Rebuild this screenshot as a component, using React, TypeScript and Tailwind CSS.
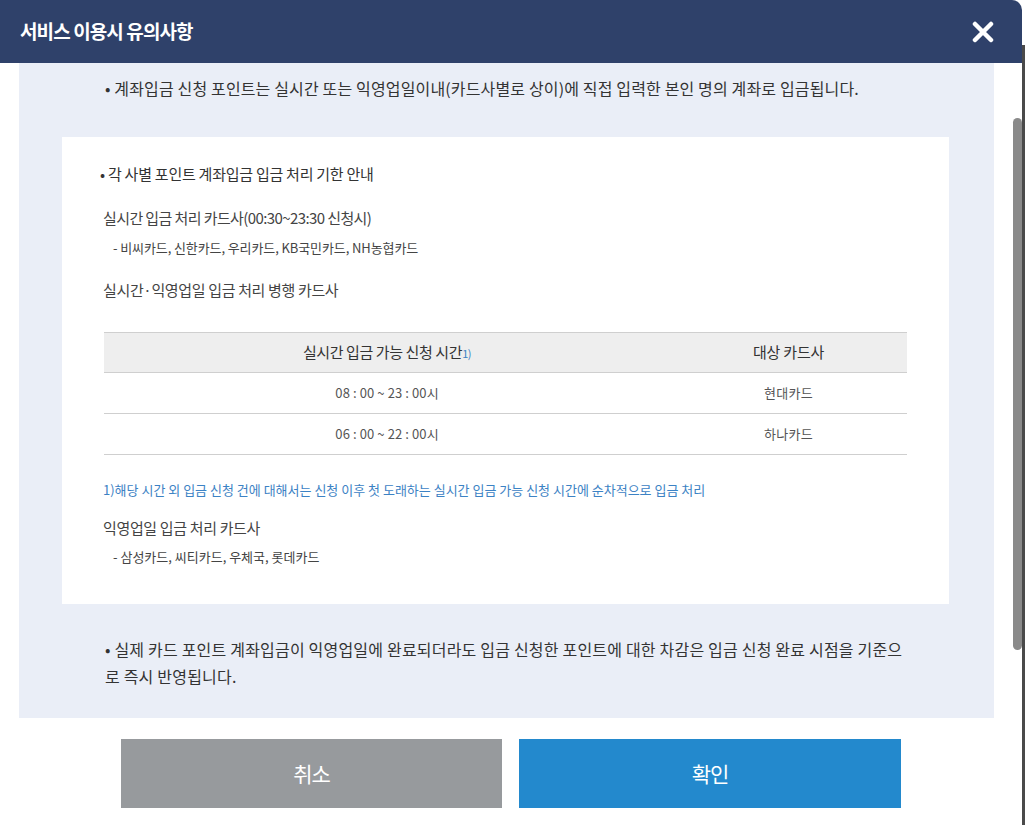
import React from "react";

const font = { fontFamily: '"Noto Sans CJK KR", "Noto Sans", sans-serif' };

export default function App() {
  return (
    <div className="flex h-[825px] w-[1025px] bg-white text-[#333]" style={font}>
      <div className="flex w-[1022px] flex-col overflow-hidden rounded-tr-[10px] bg-white">
        {/* header */}
        <div className="flex h-[63px] shrink-0 items-center justify-between bg-[#2f416a] pl-[20px] pr-[28px]">
          <h1 className="text-[19px] font-bold tracking-[-0.9px] text-white">서비스 이용시 유의사항</h1>
          <svg width="22" height="22" viewBox="0 0 22 22" className="mt-[1px]">
            <path d="M3 3 L19 19 M19 3 L3 19" stroke="white" strokeWidth="4.5" strokeLinecap="round" />
          </svg>
        </div>
        {/* body */}
        <div className="flex h-[655px] shrink-0">
          <div className="w-[1013px] px-[19px]">
            <div className="h-[655px] bg-[#eaeef7] pt-[12px] pb-[27px]">
              <p className="whitespace-nowrap pl-[86px] text-[16px] leading-[26px] tracking-[0.15px] text-[#333]">
                • 계좌입금 신청 포인트는 실시간 또는 익영업일이내(카드사별로 상이)에 직접 입력한 본인 명의 계좌로 입금됩니다.
              </p>
              <div className="ml-[43px] mt-[36px] w-[887px] bg-white px-[42px] pt-[27px] pb-[37px]">
                <p className="-ml-[4px] text-[15px] leading-[20px] tracking-[-0.25px] text-[#333]">• 각 사별 포인트 계좌입금 입금 처리 기한 안내</p>
                <p className="mt-[24px] -ml-[1px] text-[15px] leading-[20px] tracking-[-0.6px] text-[#444]">실시간 입금 처리 카드사(00:30~23:30 신청시)</p>
                <p className="mt-[10px] pl-[9px] text-[13px] leading-[20px] tracking-[-0.1px] text-[#444]">- 비씨카드, 신한카드, 우리카드, KB국민카드, NH농협카드</p>
                <p className="mt-[22px] -ml-[1px] text-[15px] leading-[20px] tracking-[-0.35px] text-[#444]">실시간·익영업일 입금 처리 병행 카드사</p>
                <table className="mt-[32px] w-full border-collapse text-center">
                  <thead>
                    <tr className="h-[40px] border-t border-b border-[#cfcfcf] bg-[#eeeeee]">
                      <th className="w-[70.5%] text-[15px] font-normal tracking-[-0.4px] text-[#333]">
                        실시간 입금 가능 신청 시간<span className="text-[11px] text-[#3c82c4]">1)</span>
                      </th>
                      <th className="text-[15px] font-normal tracking-[-0.2px] text-[#333]">대상 카드사</th>
                    </tr>
                  </thead>
                  <tbody>
                    <tr className="h-[41px] border-b border-[#cfcfcf]">
                      <td className="text-[13px] tracking-[0.1px] text-[#555]">08 : 00 ~ 23 : 00시</td>
                      <td className="text-[13px] tracking-[0.3px] text-[#555]">현대카드</td>
                    </tr>
                    <tr className="h-[41px] border-b border-[#cfcfcf]">
                      <td className="text-[13px] tracking-[0.1px] text-[#555]">06 : 00 ~ 22 : 00시</td>
                      <td className="text-[13px] tracking-[0.3px] text-[#555]">하나카드</td>
                    </tr>
                  </tbody>
                </table>
                <p className="mt-[25px] -ml-[1px] whitespace-nowrap text-[13px] leading-[20px] tracking-[0px] text-[#3c82c4]">1)해당 시간 외 입금 신청 건에 대해서는 신청 이후 첫 도래하는 실시간 입금 가능 신청 시간에 순차적으로 입금 처리</p>
                <p className="mt-[18px] -ml-[1px] text-[15px] leading-[20px] tracking-[-0.35px] text-[#444]">익영업일 입금 처리 카드사</p>
                <p className="mt-[9px] pl-[9px] text-[13px] leading-[20px] tracking-[0px] text-[#444]">- 삼성카드, 씨티카드, 우체국, 롯데카드</p>
              </div>
              <p className="mt-[32px] pl-[86px] text-[16px] leading-[27px] tracking-[0.2px] text-[#333]">
                <span className="whitespace-nowrap">• 실제 카드 포인트 계좌입금이 익영업일에 완료되더라도 입금 신청한 포인트에 대한 차감은 입금 신청 완료 시점을 기준으</span>
                <br />
                <span className="whitespace-nowrap">로 즉시 반영됩니다.</span>
              </p>
            </div>
          </div>
          {/* scrollbar */}
          <div className="flex w-[9px] flex-col pt-[55px]">
            <div className="h-[532px] w-[9px] rounded-full bg-[#8a8a8a]" />
          </div>
        </div>
        {/* footer */}
        <div className="flex gap-[17px] pl-[121px] pt-[21px]">
          <button className="flex h-[69px] w-[381px] items-center justify-center bg-[#979a9d] text-[21px] tracking-[-1px] text-white">취소</button>
          <button className="flex h-[69px] w-[382px] items-center justify-center bg-[#2389cd] text-[21px] tracking-[-1px] text-white">확인</button>
        </div>
      </div>
      <div className="mt-[45px] w-[3px] bg-[#4a4a4a]" />
    </div>
  );
}
